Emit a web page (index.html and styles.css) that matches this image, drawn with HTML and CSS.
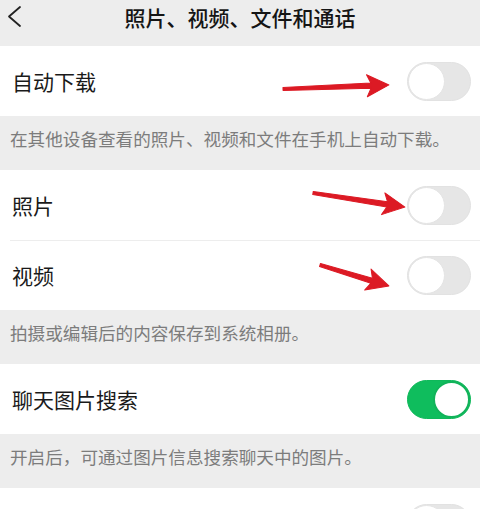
FILE: index.html
```html
<!DOCTYPE html>
<html lang="zh-CN">
<head>
<meta charset="utf-8">
<link rel="stylesheet" href="styles.css">
</head>
<body>
<div class="page">
  <header class="topbar">
    <svg class="back" width="30" height="35" viewBox="0 0 30 35"><polyline points="20,7 9,16.5 20,26" fill="none" stroke="#222" stroke-width="1.8" stroke-linecap="round" stroke-linejoin="round"/></svg>
    <h1 class="title">照片、视频、文件和通话</h1>
  </header>

  <section class="group">
    <div class="row"><span class="label">自动下载</span><span class="switch"></span></div>
  </section>
  <p class="desc">在其他设备查看的照片、视频和文件在手机上自动下载。</p>

  <section class="group">
    <div class="row divided"><span class="label">照片</span><span class="switch"></span></div>
    <div class="row short"><span class="label">视频</span><span class="switch"></span></div>
  </section>
  <p class="desc">拍摄或编辑后的内容保存到系统相册。</p>

  <section class="group">
    <div class="row"><span class="label">聊天图片搜索</span><span class="switch on"></span></div>
  </section>
  <p class="desc">开启后，可通过图片信息搜索聊天中的图片。</p>

  <section class="group">
    <div class="row"><span class="label"></span><span class="switch"></span></div>
  </section>

  <svg class="arrows" width="480" height="509" viewBox="0 0 480 509">
    <g fill="#dc1a24" stroke="#dc1a24" stroke-width="1" stroke-linejoin="round">
      <g transform="translate(283,89) rotate(-2.2)">
        <path d="M0,-1.6 L88,-2.6 L84,-11 L106,0 L84,11 L88,2.6 L0,1.6 Z"/>
      </g>
      <g transform="translate(313,193) rotate(8.7)">
        <path d="M0,-1.6 L75,-2.6 L71,-11 L93,0 L71,11 L75,2.6 L0,1.6 Z"/>
      </g>
      <g transform="translate(320,265) rotate(16.9)">
        <path d="M0,-1.6 L54,-2.6 L50,-11 L72,0 L50,11 L54,2.6 L0,1.6 Z"/>
      </g>
    </g>
  </svg>
</div>
</body>
</html>
```

FILE: styles.css
```css
html, body {
  margin: 0;
  padding: 0;
  background: #ededed;
}
body {
  width: 480px;
  height: 509px;
  overflow: hidden;
  font-family: "Noto Sans CJK SC", "Noto Sans", sans-serif;
}
.page {
  position: relative;
  width: 480px;
  height: 509px;
  overflow: hidden;
}
.topbar {
  height: 46px;
  background: #ededed;
  position: relative;
  display: flex;
  justify-content: center;
  align-items: flex-start;
}
.back {
  position: absolute;
  left: 0;
  top: 0;
}
.title {
  margin: 0;
  font-size: 21px;
  font-weight: 500;
  line-height: 35px;
  color: #151515;
}
.group {
  background: #fff;
}
.row {
  height: 70px;
  display: flex;
  align-items: center;
  justify-content: space-between;
  padding: 0 9px 0 12px;
  box-sizing: border-box;
  position: relative;
}
.row.divided {
  height: 71px;
  border-bottom: 1px solid transparent;
}
.row.divided::after {
  content: "";
  position: absolute;
  left: 10px;
  right: 0;
  bottom: -1px;
  height: 1px;
  background: #ededed;
}
.row.short {
  height: 69px;
}
.label {
  font-size: 21px;
  color: #1a1a1a;
  line-height: 1;
}
.desc {
  margin: 0;
  height: 54px;
  box-sizing: border-box;
  padding: 12px 10px 0;
  font-size: 17.6px;
  line-height: 22px;
  color: #7c7c7c;
  white-space: nowrap;
}
.switch {
  width: 64px;
  height: 39px;
  border-radius: 20px;
  background: #e6e6e6;
  position: relative;
  box-sizing: border-box;
  border: 1px solid #e2e2e2;
  flex: none;
}
.switch::after {
  content: "";
  position: absolute;
  left: 0;
  top: 0;
  width: 37px;
  height: 37px;
  border-radius: 50%;
  background: #fff;
  box-sizing: border-box;
  border: 1px solid #e4e4e4;
}
.switch.on {
  background: #0fbd5d;
  border-color: #0fb85a;
}
.switch.on::after {
  left: auto;
  right: 0;
  border: 2px solid #11b35a;
}
.arrows {
  position: absolute;
  left: 0;
  top: 0;
  pointer-events: none;
}
```
